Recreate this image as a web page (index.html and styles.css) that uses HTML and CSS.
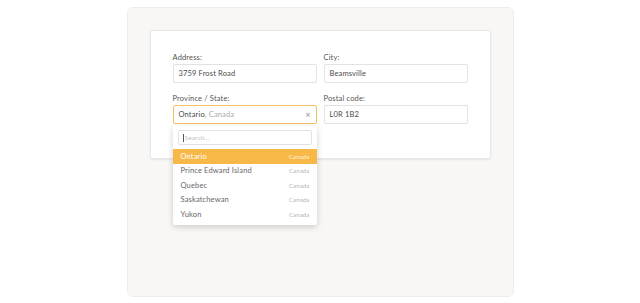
FILE: index.html
```html
<!DOCTYPE html>
<html lang="en">
<head>
    <meta charset="UTF-8">
    <meta name="viewport" content="width=device-width, initial-scale=1.0">
    <title>Address form</title>
    <link rel="stylesheet" href="styles.css">
</head>
<body>
    <div class="stage">
        <div class="card">
            <form class="grid">
                <div class="form-group">
                    <label>Address:</label>
                    <div class="field">3759 Frost Road</div>
                </div>
                <div class="form-group">
                    <label>City:</label>
                    <div class="field">Beamsville</div>
                </div>
                <div class="form-group">
                    <label>Province / State:</label>
                    <div class="select-wrap">
                        <div class="field active">
                            <span>Ontario<span class="muted">, Canada</span></span>
                            <span class="clear">&times;</span>
                        </div>
                        <!-- dropdown menu -->
                        <div class="dropdown">
                            <div class="search"><span class="caret"></span>Search...</div>
                            <ul class="options">
                                <li class="selected"><span>Ontario</span><span class="country">Canada</span></li>
                                <li><span>Prince Edward Island</span><span class="country">Canada</span></li>
                                <li><span>Quebec</span><span class="country">Canada</span></li>
                                <li><span>Saskatchewan</span><span class="country">Canada</span></li>
                                <li><span>Yukon</span><span class="country">Canada</span></li>
                            </ul>
                        </div>
                    </div>
                </div>
                <div class="form-group">
                    <label>Postal code:</label>
                    <div class="field">L0R 1B2</div>
                </div>
            </form>
        </div>
    </div>
</body>
</html>
```

FILE: styles.css
```css
body {
    margin: 0;
    font-family: Lato, "Open Sans", sans-serif;
    letter-spacing: 0.15px;
    background-color: #fff;
}
.stage {
    width: 387px;
    height: 290px;
    margin: 7px auto 0;
    background: #f8f7f5;
    border: 1px solid #efedea;
    border-radius: 6px;
    padding: 22px;
    box-sizing: border-box;
}
.card {
    background: #fff;
    border: 1px solid #e9e8e6;
    border-radius: 2px;
    box-shadow: 0 1px 2px rgba(0,0,0,0.08);
    padding: 22px 22px 34px;
    height: 129px;
    box-sizing: border-box;
}
.grid {
    display: grid;
    grid-template-columns: 144px 144px;
    column-gap: 7px;
    row-gap: 11px;
}
label {
    display: block;
    font-size: 7.5px;
    line-height: 9px;
    color: #555;
    margin-bottom: 2px;
}
.field {
    height: 19px;
    box-sizing: border-box;
    border: 1px solid #e3e2e0;
    border-radius: 2px;
    padding: 0 5px;
    display: flex;
    align-items: center;
    justify-content: space-between;
    font-size: 7.5px;
    color: #4a4a4a;
}
.field.active {
    border-color: #f3c060;
}
.muted {
    color: #aaa;
}
.clear {
    color: #9a9a9a;
    font-size: 9px;
}
.select-wrap {
    position: relative;
}
.dropdown {
    position: absolute;
    top: 21px;
    left: 0;
    width: 144px;
    background: #fff;
    border-radius: 2px;
    box-shadow: 0 2px 6px rgba(0,0,0,0.18);
    padding: 4px 0 3px;
    z-index: 2;
}
.search {
    margin: 0 5px 4px;
    height: 15px;
    border: 1px solid #e3e2e0;
    border-radius: 2px;
    box-sizing: border-box;
    display: flex;
    align-items: center;
    padding: 0 4px;
    font-size: 6.5px;
    color: #c2c2c2;
}
.caret {
    width: 1px;
    height: 8px;
    background: #555;
    margin-right: 1px;
}
.options {
    list-style: none;
    margin: 0;
    padding: 0;
}
.options li {
    height: 14.5px;
    display: flex;
    align-items: center;
    justify-content: space-between;
    padding: 0 7px 0 8px;
    font-size: 7.5px;
    color: #666;
}
.options li.selected {
    background: #f8b848;
    color: #fff;
}
.country {
    font-size: 6px;
    color: #b3b3b3;
}
.options li.selected .country {
    color: #fff4de;
}
```
